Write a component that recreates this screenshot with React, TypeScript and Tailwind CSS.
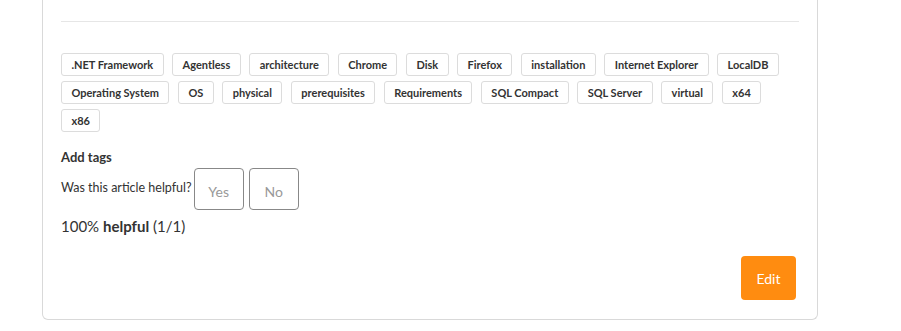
import React from "react";

const tags = [
  ".NET Framework", "Agentless", "architecture", "Chrome", "Disk", "Firefox", "installation",
  "Internet Explorer", "LocalDB", "Operating System", "OS", "physical", "prerequisites",
  "Requirements", "SQL Compact", "SQL Server", "virtual", "x64", "x86",
];

export default function App() {
  return (
    <div className="w-[901px] h-[331px] bg-white overflow-hidden text-[#333]" style={{ fontFamily: "Lato, 'Noto Sans', sans-serif" }}>
      <div className="ml-[42px] w-[776px] border-x border-b border-[#d9d9d9] rounded-b-[6px] pl-[18px] pr-[21px] pt-[21px] pb-[19px]">
        <div className="h-px bg-[#e6e6e6] mr-[-3px]" />
        <div className="mt-[31px] flex flex-wrap gap-x-[8.6px] gap-y-[5px]">
          {tags.map((t) => (
            <span key={t} className="h-[23px] px-[9.4px] flex items-center border border-[#dcdcdc] rounded-[3px] text-[11px] font-bold text-[#333] leading-none">
              {t}
            </span>
          ))}
        </div>
        <div className="mt-[16px] text-[13px] font-bold leading-[18px] text-[#333]">Add tags</div>
        <div className="mt-[2px] flex items-center">
          <span className="text-[12.5px] leading-[18px] text-[#333] mt-[-3px]">Was this article helpful?</span>
          <button className="ml-[2px] w-[50px] h-[42px] border border-[#888] rounded-[4px] text-[14px] text-[#999] pt-[4px]">Yes</button>
          <button className="ml-[5px] w-[50px] h-[42px] border border-[#888] rounded-[4px] text-[14px] text-[#999] pt-[4px]">No</button>
        </div>
        <div className="mt-[6px] text-[15px] leading-[20px] text-[#333]">
          100% <span className="font-bold">helpful</span> (1/1)
        </div>
        <div className="mt-[20px] flex justify-end">
          <button className="w-[55px] h-[44px] bg-[#ff8c10] rounded-[4px] text-white text-[14px]">Edit</button>
        </div>
      </div>
    </div>
  );
}
